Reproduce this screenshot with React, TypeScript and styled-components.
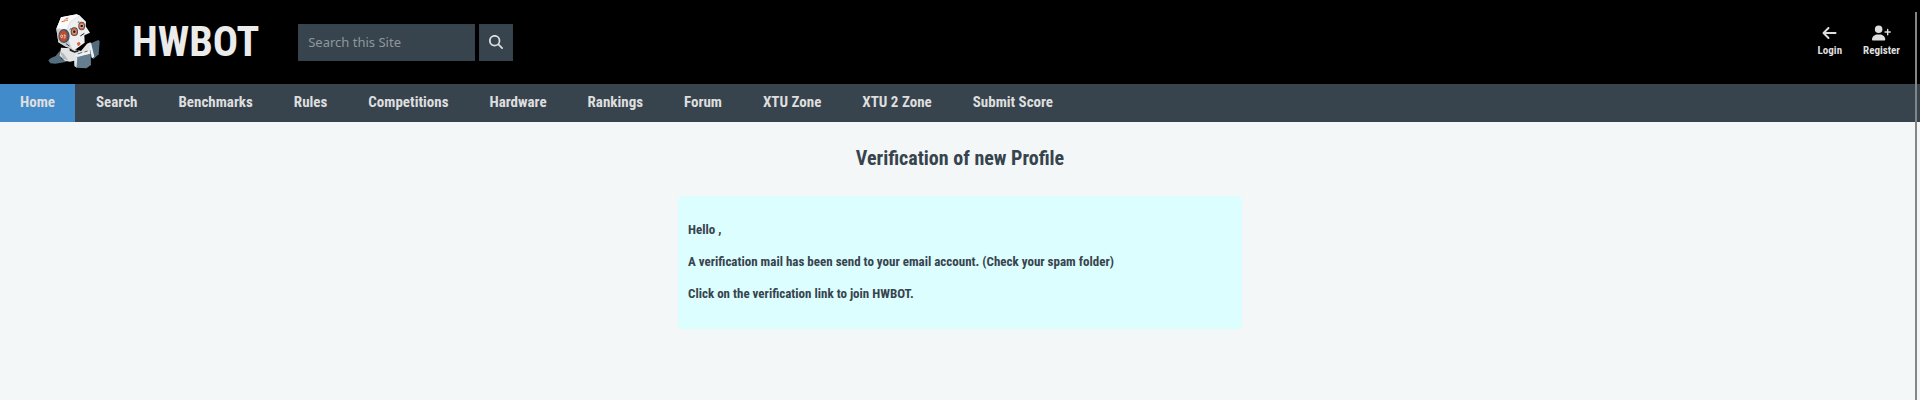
import React from 'react';
import styled, { createGlobalStyle } from 'styled-components';
import { FaArrowLeft, FaMagnifyingGlass, FaUserPlus } from 'react-icons/fa6';

const GlobalStyle = createGlobalStyle`
  * { box-sizing: border-box; }
  body {
    margin: 0;
    background: #f3f7f8;
    color: #37444e;
    font-family: "Roboto Condensed", "Open Sans Condensed", Roboto, sans-serif;
    font-weight: 700;
  }
`;

const Page = styled.div`
  min-height: 100vh;
`;

const Header = styled.header`
  display: flex;
  align-items: center;
  height: 84px;
  padding: 0 20px 0 47px;
  background: #000;
`;

const Brand = styled.a`
  display: flex;
  align-items: center;
  gap: 30px;
  color: #ebebeb;
  font-size: 42px;
  line-height: 56px;
  text-decoration: none;
`;

const SearchForm = styled.form`
  display: flex;
  gap: 4px;
  margin-left: 39px;
`;

const SearchInput = styled.input`
  width: 177px;
  height: 37px;
  padding: 0 9px;
  border: 1px solid #35424c;
  background: #37444e;
  color: #dedede;
  font: 400 13px "Noto Sans", sans-serif;
  &::placeholder { color: #8f979c; opacity: 1; }
`;

const SearchButton = styled.button`
  display: flex;
  align-items: center;
  justify-content: center;
  width: 34px;
  height: 37px;
  padding: 0;
  border: 1px solid #35424c;
  background: #37444e;
  color: #dedede;
  font-size: 14px;
  cursor: pointer;
`;

const Account = styled.div`
  display: flex;
  gap: 21px;
  margin-left: auto;
`;

const AccountLink = styled.a`
  display: flex;
  flex-direction: column;
  align-items: center;
  gap: 2px;
  color: #dedede;
  font-size: 11px;
  line-height: 16px;
  text-decoration: none;
  svg { height: 16px; }
`;

const Nav = styled.nav`
  display: flex;
  gap: 1px;
  height: 38px;
  background: #37444e;
`;

const NavLink = styled.a<{ $active?: boolean }>`
  padding: 0 20px;
  background: ${(p) => (p.$active ? '#428bca' : 'transparent')};
  color: #dedede;
  font-size: 15px;
  line-height: 36px;
  text-decoration: none;
`;

const Main = styled.main`
  display: flex;
  flex-direction: column;
  align-items: center;
  padding: 21px 20px;
`;

const Title = styled.h1`
  margin: 0 0 23px;
  font-size: 20px;
  line-height: 30px;
`;

const Notice = styled.section`
  width: 100%;
  max-width: 564px;
  padding: 18px 10px 19px;
  border-radius: 4px;
  background: #dcfeff;
  font-size: 13px;
  line-height: 32px;
  p { margin: 0; }
`;

const ScrollEdge = styled.div`
  position: fixed;
  top: 12px;
  right: 3px;
  bottom: 0;
  width: 2px;
  background: #858585;
`;

const Robot = () => (
  <svg width="55" height="58" viewBox="50 36 165 174" aria-hidden="true">
    <path d="M54 178l8-7 14-6 12-15 4 22 17 10-16 3-18 3-15-1z" fill="#546d7f" />
    <path d="M92 140l30 2 30 8 18-22 10-4 5 12-8 30-40 12-18 4-16-3-15-15z" fill="#e2e3e4" />
    <path d="M88 150l12 8 14 20-16-5z" fill="#b4b9bd" />
    <path d="M178 128l26-11 4 4-3 39-15 14-9-6z" fill="#526c7e" />
    <path d="M176 130l6-5 10 42-7 5z" fill="#f1f1f1" />
    <path d="M140 166l41-8 1 34-14 10-30-2z" fill="#657e90" />
    <path d="M131 164l10 3-2 33-7-5z" fill="#e4e5e6" />
    <path d="M133 161l40-13 9 9-40 11z" fill="#f2f2f2" />
    <path d="M142 159l14-5M162 153l10-3" fill="none" stroke="#252b30" strokeWidth="2" />
    <path d="M118 142l14 8 13-4-1 6-12 3-14-6z" fill="#222" />
    <path d="M92 49L139 40 149 44 167 62 166 76 179 95 162 103 163 125 134 146 106 137 84 124 78 83z" fill="#efeff0" />
    <path d="M92 49L139 40 149 44 120 62 109 86 78 83z" fill="#fbfbfb" />
    <path d="M78 83L109 86 116 120 124 142 104 135 84 124z" fill="#c9ccce" />
    <path d="M80 83l29 3 11-24 27-17" fill="none" stroke="#b3b8bb" strokeWidth="1" />
    <path d="M94 62l10-2M102 57l11 1M106 53l8-2" stroke="#d96c47" strokeWidth="3" />
    <ellipse cx="101" cy="105" rx="17" ry="21" fill="#445663" />
    <ellipse cx="99" cy="105" rx="12" ry="17" fill="#bc4e2d" />
    <ellipse cx="94" cy="106" rx="3" ry="4" fill="none" stroke="#fff" strokeWidth="2" />
    <path d="M100 102h5l-2 4c4 1 2 6-3 5" fill="none" stroke="#fff" strokeWidth="2" />
    <ellipse cx="132" cy="92" rx="11" ry="13" fill="#34424b" />
    <ellipse cx="132" cy="92" rx="9" ry="11" fill="#d36843" />
    <circle cx="132" cy="92" r="6" fill="#e7c6b8" />
    <circle cx="132" cy="92" r="4" fill="#171b1e" />
    <ellipse cx="154" cy="75" rx="10" ry="13" fill="#34424b" />
    <ellipse cx="154" cy="75" rx="8" ry="11" fill="#d36843" />
    <circle cx="154" cy="75" r="6" fill="#e7c6b8" />
    <circle cx="154" cy="75" r="4" fill="#171b1e" />
    <path d="M150 105l12-8" stroke="#181b1e" strokeWidth="3" />
    <path d="M118 88l4-7M143 66l3-6" stroke="#424b51" strokeWidth="2" />
    <path d="M140 126l7-4 4 7-6 6-4-2z" fill="#d36843" />
    <path d="M107 128l10 7" stroke="#333d43" strokeWidth="3" />
  </svg>
);

const sections = [
  'Home', 'Search', 'Benchmarks', 'Rules', 'Competitions', 'Hardware',
  'Rankings', 'Forum', 'XTU Zone', 'XTU 2 Zone', 'Submit Score',
];

export default function App() {
  return (
    <Page>
      <GlobalStyle />
      <Header>
        <Brand href="#">
          <Robot />
          <span>HWBOT</span>
        </Brand>
        <SearchForm role="search">
          <SearchInput type="text" aria-label="Search this Site" placeholder="Search this Site" />
          <SearchButton type="submit" aria-label="Search"><FaMagnifyingGlass /></SearchButton>
        </SearchForm>
        <Account>
          <AccountLink href="#"><FaArrowLeft size={15} />Login</AccountLink>
          <AccountLink href="#"><FaUserPlus size={19} />Register</AccountLink>
        </Account>
      </Header>
      <Nav>
        {sections.map((name, i) => (
          <NavLink key={name} href="#" $active={i === 0}>{name}</NavLink>
        ))}
      </Nav>
      <Main>
        <Title>Verification of new Profile</Title>
        <Notice>
          <p>Hello ,</p>
          <p>A verification mail has been send to your email account. (Check your spam folder)</p>
          <p>Click on the verification link to join HWBOT.</p>
        </Notice>
      </Main>
      <ScrollEdge />
    </Page>
  );
}
